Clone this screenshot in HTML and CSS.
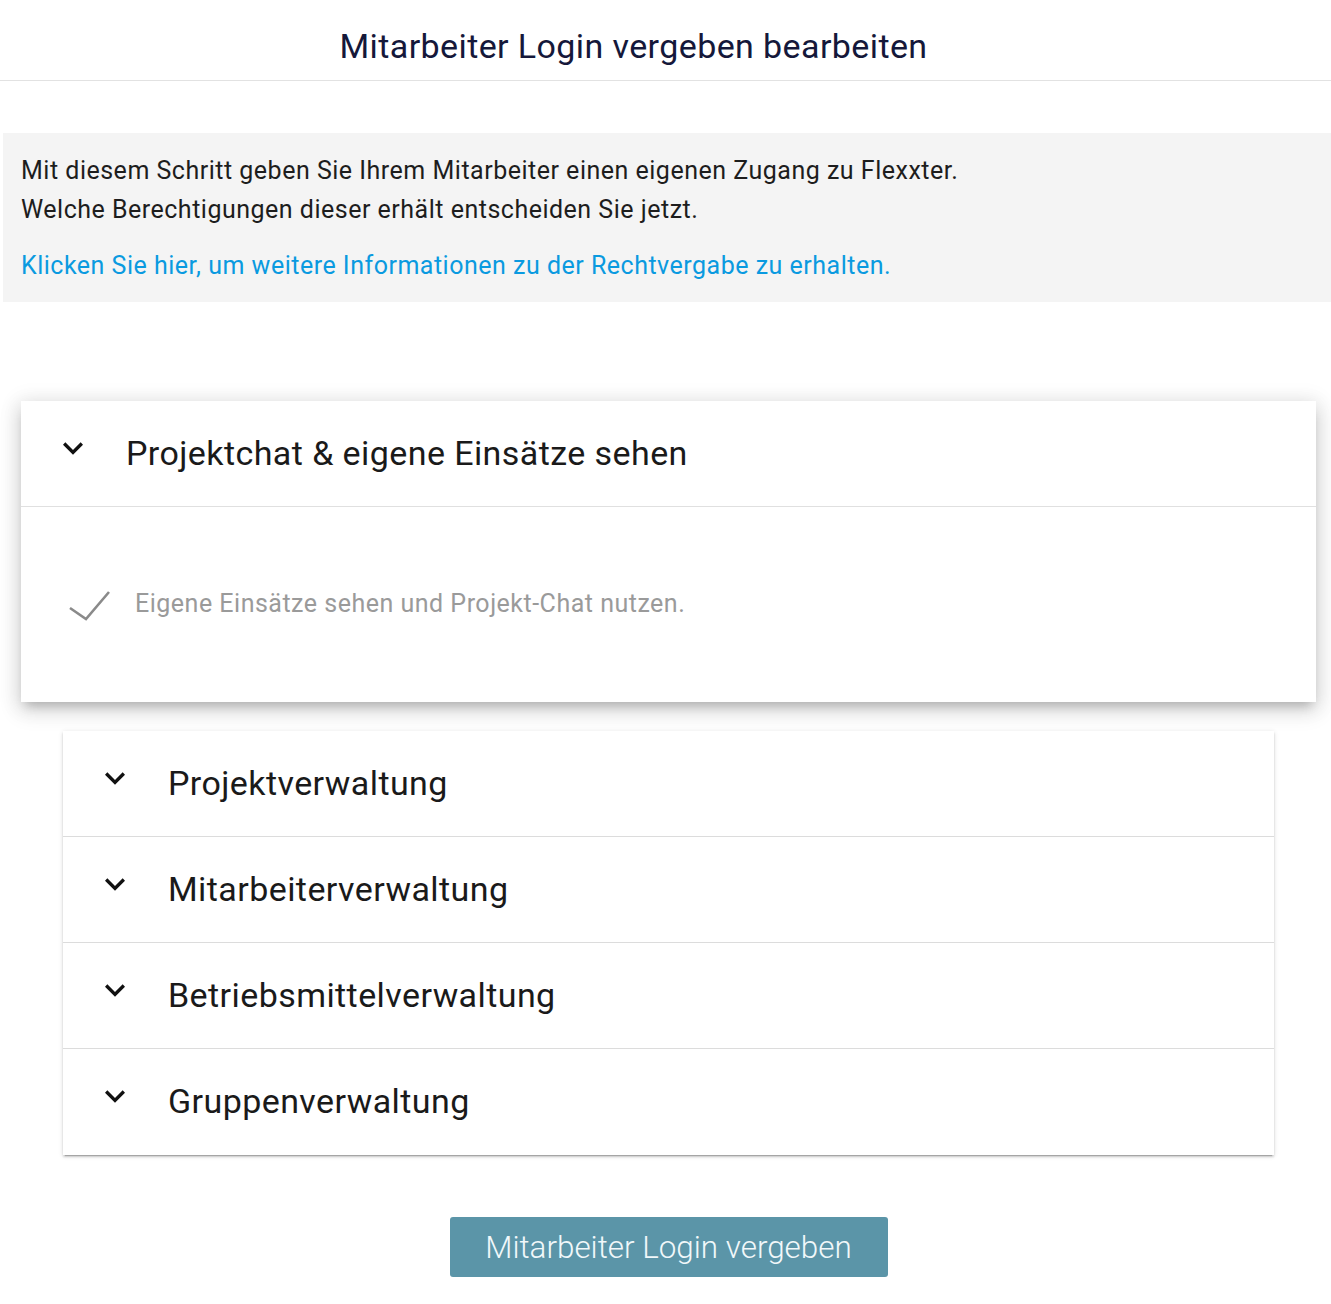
FILE: index.html
```html
<!DOCTYPE html>
<html lang="de">
<head>
<meta charset="utf-8">
<title>Mitarbeiter Login vergeben bearbeiten</title>
<link rel="stylesheet" href="styles.css">
</head>
<body>
<header class="page-header">
  <h1 class="page-title">Mitarbeiter Login vergeben bearbeiten</h1>
</header>

<section class="info-box">
  <p class="info-text">Mit diesem Schritt geben Sie Ihrem Mitarbeiter einen eigenen Zugang zu Flexxter.<br>Welche Berechtigungen dieser erhält entscheiden Sie jetzt.</p>
  <a class="info-link" href="#">Klicken Sie hier, um weitere Informationen zu der Rechtvergabe zu erhalten.</a>
</section>

<main class="panels">
  <div class="panel panel-open">
    <div class="panel-header">
      <svg class="chevron" viewBox="0 0 24 24" width="40" height="40"><path d="M16.59 8.59L12 13.17 7.41 8.59 6 10l6 6 6-6z"/></svg>
      <span class="panel-title">Projektchat &amp; eigene Einsätze sehen</span>
    </div>
    <div class="panel-body">
      <svg class="check" viewBox="0 0 44 32" width="44" height="32"><polyline points="3,18 19,29 42,2"/></svg>
      <span class="perm-text">Eigene Einsätze sehen und Projekt-Chat nutzen.</span>
    </div>
  </div>

  <div class="panel-group">
    <div class="group-row">
      <svg class="chevron" viewBox="0 0 24 24" width="40" height="40"><path d="M16.59 8.59L12 13.17 7.41 8.59 6 10l6 6 6-6z"/></svg>
      <span class="panel-title">Projektverwaltung</span>
    </div>
    <div class="group-row">
      <svg class="chevron" viewBox="0 0 24 24" width="40" height="40"><path d="M16.59 8.59L12 13.17 7.41 8.59 6 10l6 6 6-6z"/></svg>
      <span class="panel-title">Mitarbeiterverwaltung</span>
    </div>
    <div class="group-row">
      <svg class="chevron" viewBox="0 0 24 24" width="40" height="40"><path d="M16.59 8.59L12 13.17 7.41 8.59 6 10l6 6 6-6z"/></svg>
      <span class="panel-title">Betriebsmittelverwaltung</span>
    </div>
    <div class="group-row">
      <svg class="chevron" viewBox="0 0 24 24" width="40" height="40"><path d="M16.59 8.59L12 13.17 7.41 8.59 6 10l6 6 6-6z"/></svg>
      <span class="panel-title">Gruppenverwaltung</span>
    </div>
  </div>

  <div class="actions">
    <button class="primary-btn" type="button">Mitarbeiter Login vergeben</button>
  </div>
</main>
</body>
</html>
```
FILE: styles.css
```css
* { box-sizing: border-box; }

html, body {
  margin: 0;
  padding: 0;
  background: #ffffff;
  font-family: Roboto, "Noto Sans", "Liberation Sans", sans-serif;
  color: #212121;
}

.page-header {
  height: 81px;
  border-bottom: 1px solid #e2e2e2;
  display: flex;
  align-items: center;
  justify-content: center;
  padding-right: 64px;
}

.page-title {
  margin: 0;
  font-size: 34px;
  font-weight: 400;
  letter-spacing: 0.4px;
  color: #15183a;
  padding-top: 12px;
}

.info-box {
  margin: 52px 0 0 3px;
  background: #f4f4f4;
  padding: 18px 18px 17px;
  height: 169px;
}

.info-text {
  margin: 0;
  font-size: 25px;
  letter-spacing: 0.5px;
  line-height: 39px;
  color: #1d1d1d;
}

.info-link {
  display: block;
  margin-top: 17px;
  font-size: 25px;
  letter-spacing: 0.5px;
  line-height: 39px;
  color: #0a9ae0;
  text-decoration: none;
}

.panels {
  margin: 99px 15px 0 21px;
}

.panel {
  background: #fff;
  box-shadow: 0 8px 10px -5px rgba(0,0,0,.2), 0 8px 20px 2px rgba(0,0,0,.12), 0 2px 20px 3px rgba(0,0,0,.08);
}

.panel-header {
  height: 106px;
  border-bottom: 1px solid #e0e0e0;
  display: flex;
  align-items: center;
  padding-left: 32px;
}

.chevron {
  fill: #111;
  flex: none;
  margin-top: -12px;
}

.panel-title {
  font-size: 34px;
  font-weight: 400;
  letter-spacing: 0.42px;
  color: #1a1a1a;
  margin-left: 33px;
  margin-top: -2px;
}

.panel-body {
  height: 195px;
  display: flex;
  align-items: center;
  padding-left: 46px;
}

.check {
  fill: none;
  stroke: #8a8a8a;
  stroke-width: 2.6;
  flex: none;
  margin-top: 2px;
}

.perm-text {
  margin-left: 24px;
  font-size: 25px;
  letter-spacing: 0.5px;
  color: #9a9a9a;
  margin-top: -2px;
}

.panel-group {
  margin: 29px 42px 0;
  background: #fff;
  box-shadow: 0 3px 1px -2px rgba(0,0,0,.2), 0 2px 2px 0 rgba(0,0,0,.14), 0 1px 5px 0 rgba(0,0,0,.12);
}

.group-row {
  height: 106px;
  display: flex;
  align-items: center;
  padding-left: 32px;
  border-bottom: 1px solid #dcdcdc;
}

.group-row:last-child { border-bottom: none; }

.actions {
  display: flex;
  justify-content: center;
  margin-top: 62px;
}

.primary-btn {
  width: 438px;
  height: 60px;
  border: none;
  border-radius: 3px;
  background: #5b95a8;
  color: #f1f8fa;
  font-family: Roboto, "Noto Sans", "Liberation Sans", sans-serif;
  font-size: 31.4px;
  font-weight: 300;
  cursor: pointer;
}
```
